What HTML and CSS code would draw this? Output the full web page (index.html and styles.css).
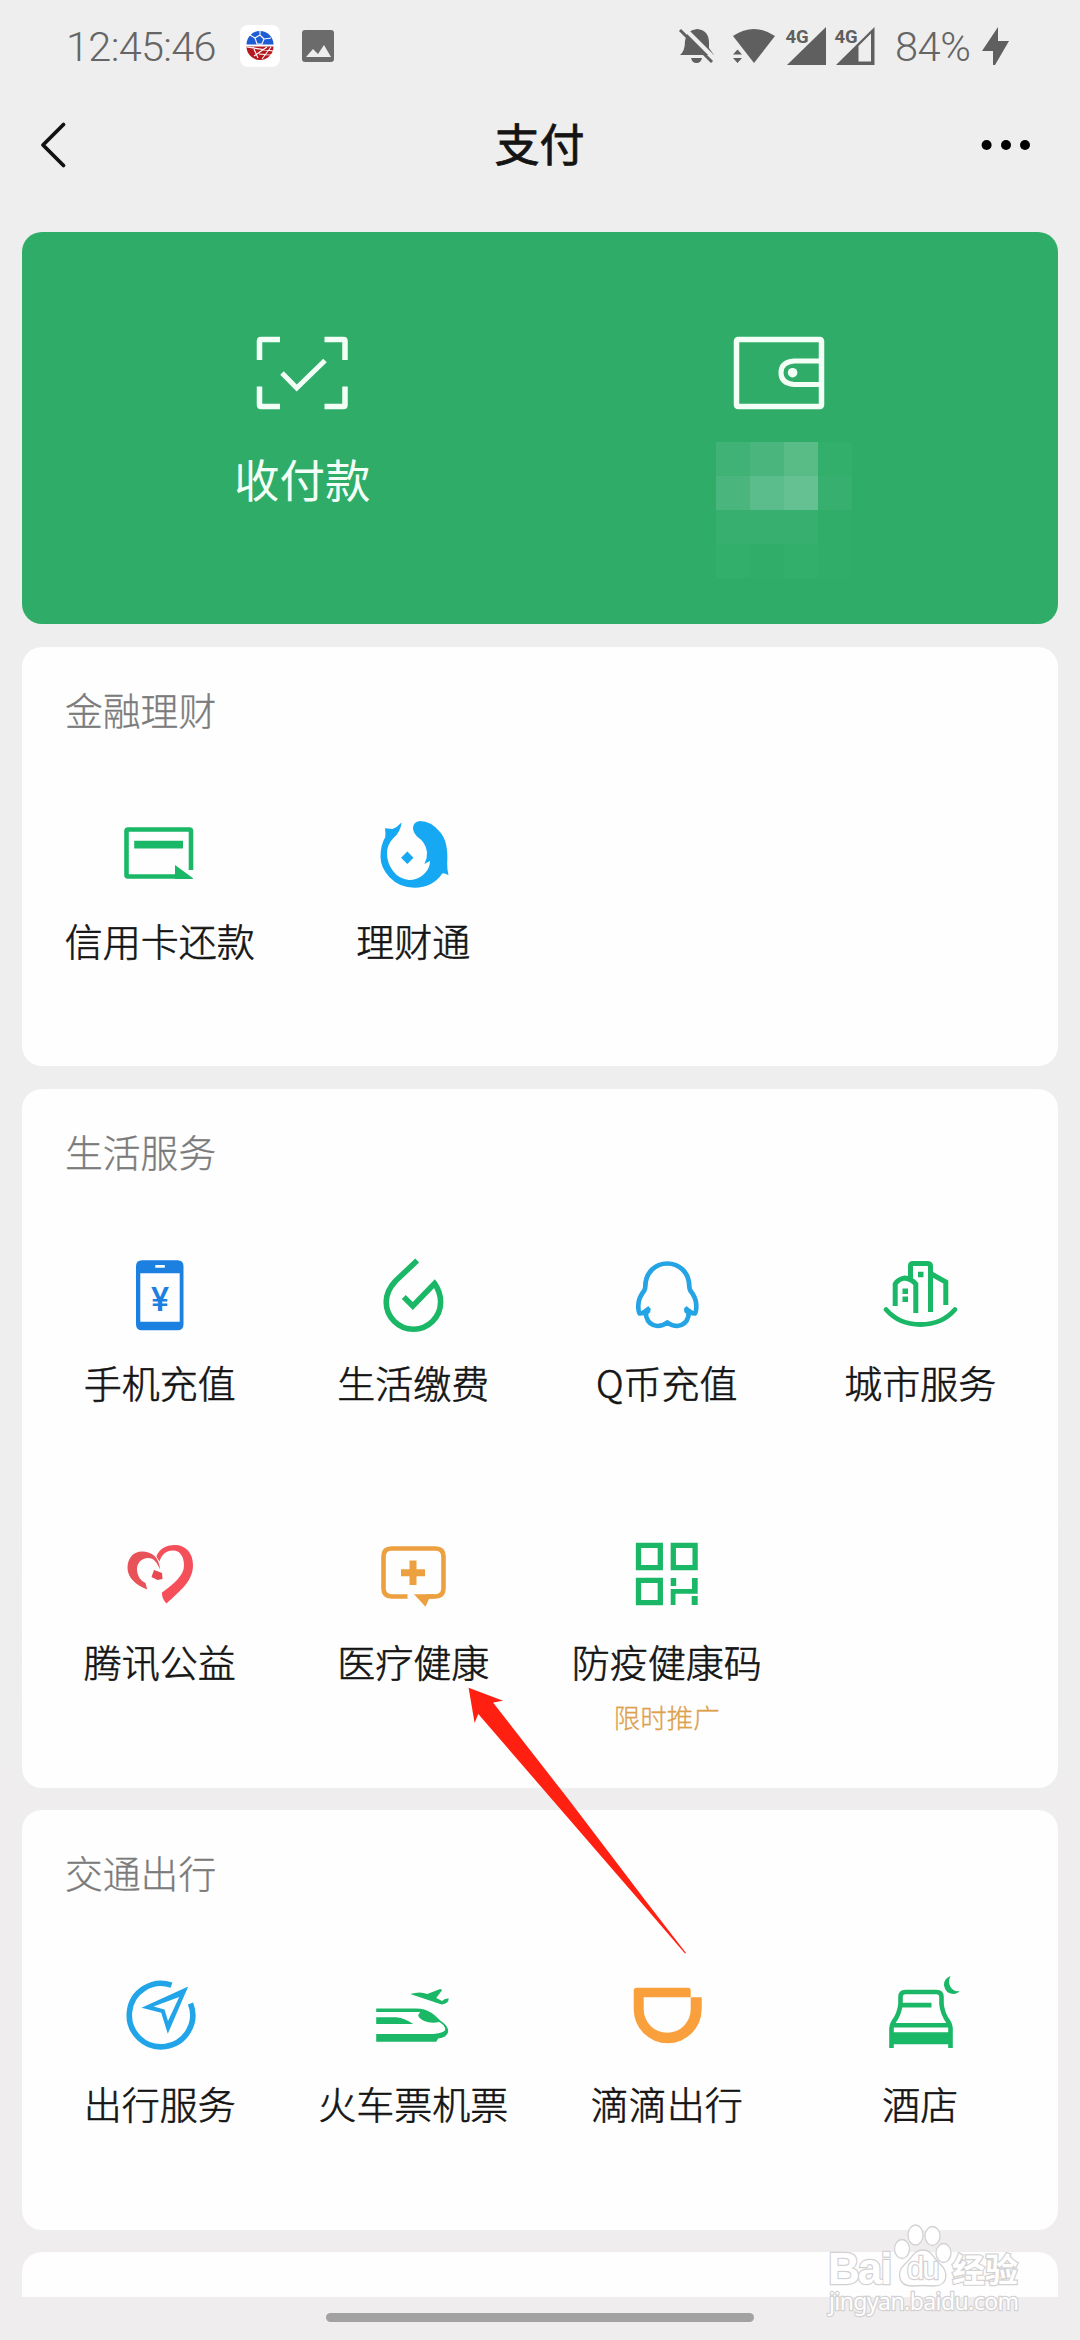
FILE: index.html
```html
<!DOCTYPE html>
<html lang="zh-CN">
<head>
<meta charset="utf-8">
<title>支付</title>
<link rel="stylesheet" href="styles.css">
</head>
<body>
<div class="screen">
  <header class="status">
    <div class="status-left">
      <span class="clock">12:45:46</span>
      <svg class="app-badge" viewBox="0 0 40 42"><rect width="40" height="42" rx="8" fill="#fff"/><path d="M6.500 19.500a13.500 13.500 0 0 1 27 0z" fill="#1d5cd2"/><path d="M6.500 21.500h27a13.500 13.500 0 0 1-27 0z" fill="#b3191f"/><path d="M15 13l5-3 4 4-2 5h-5zM15 13l-5-3M24 14l7-1M20 10v-4M7 22l26 4M14 31l13-9M18 33l-5-11M19 29l13 1M22 34l9-12" fill="none" stroke="#fff" stroke-width="1.100"/></svg>
      <svg class="photo" viewBox="0 0 32 32"><rect width="32" height="32" rx="3" fill="#6b6b6b"/><path d="M4 27l7-8 5 5 6-9 7 12z" fill="#eee"/></svg>
    </div>
    <div class="status-right">
      <svg width="36" height="36" viewBox="678 29 36 36"><path d="M680 56q5-4 5-14 1-11 12-12 12 1 12 14v5l5 7zM691 59h11q-1 5-5.500 5t-5.500-5" fill="#5f5f5f"/><path d="M684 29l34 34" stroke="#eee" stroke-width="4"/><path d="M680 31l32 32" stroke="#5f5f5f" stroke-width="3"/></svg>
      <svg class="wifi" width="44" height="36" viewBox="732 28 44 36"><path d="M733 36q21-14 42 0l-21 27z" fill="#5f5f5f"/><path d="M732 55l5.500-7 5.500 7v3l-5.500 7-5.500-7z" fill="#eee"/><path d="M733 54.500l4.500-5 4.500 5zM733 58l4.500 5 4.500-5z" fill="#5f5f5f"/></svg>
      <svg class="signal" width="42" height="40" viewBox="785 25 42 40"><path d="M787 64l39-38v38z" fill="#5f5f5f"/><text x="785.500" y="41.500" class="net">4G</text></svg>
      <svg class="signal" width="42" height="40" viewBox="834 25 42 40"><path d="M836 64l38.500-38v38z" fill="#5f5f5f"/><path d="M858.500 45l12.500-12.500v28h-12.500z" fill="#eee"/><text x="834.500" y="41.500" class="net">4G</text></svg>
      <span class="battery">84%</span>
      <svg width="28" height="40" viewBox="982 26 28 40"><path d="M998 27v14h11l-14 24h-2V51h-11z" fill="#5f5f5f"/></svg>
    </div>
  </header>
  <nav class="nav">
    <svg width="30" height="48" viewBox="38 121 30 48"><path d="M63.500 124.500L43 145l20.500 20.500" fill="none" stroke="#111" stroke-width="3.800" stroke-linecap="round" stroke-linejoin="round"/></svg>
    <h1>支付</h1>
    <svg width="50" height="12" viewBox="980 139 50 12"><g fill="#000"><circle cx="985.600" cy="145" r="5"/><circle cx="1005" cy="145" r="5"/><circle cx="1024" cy="145" r="5"/></g></svg>
  </nav>

  <main class="cards">
    <section class="hero">
      <div class="hero-item">
        <svg width="92" height="74" viewBox="256 336 92 74"><g fill="none" stroke="#f3fff6" stroke-width="5.500"><path d="M259.500 360v-19q0-1.500 1.500-1.500h19M324.500 339.500h19q1.500 0 1.500 1.500v19M345 386.500v18.500q0 1.500-1.500 1.500h-19M280 406.500h-19q-1.500 0-1.500-1.500v-18.500"/><path d="M282 373l14.700 15L325 360.500" stroke-width="5"/></g></svg>
        <span class="hero-label">收付款</span>
      </div>
      <div class="hero-item">
        <svg width="92" height="74" viewBox="731 336 92 74"><rect x="734.500" y="339.500" width="85" height="67" rx="1.500" fill="none" stroke="#f3fff6" stroke-width="5.500"/><path d="M819 361h-27q-13 1-13 11.700t13 11.700h27" fill="none" stroke="#f3fff6" stroke-width="5"/><circle cx="790.600" cy="372.700" r="4.800" fill="#f3fff6"/></svg>
        <div class="mosaic">
          <i class="m3"></i><i class="m4"></i><i class="m5"></i><i class="m1"></i>
          <i class="m4"></i><i class="m6"></i><i class="m7"></i><i class="m2"></i>
          <i class="m2"></i><i class="m2"></i><i class="m2"></i><i class="m0"></i>
          <i class="m1"></i><i class="m0"></i><i class="m1"></i><i class="m0"></i>
        </div>
      </div>
    </section>

    <section class="card">
      <h2>金融理财</h2>
      <div class="grid">
        <div class="tile"><svg viewBox="120 813 80 80"><path d="M191 870v-39q0-1.500-1.500-1.500h-61.500q-1.500 0-1.500 1.500v44q0 1.500 1.500 1.500h55" fill="none" stroke="#1ab767" stroke-width="4.600"/><path d="M134.200 840.700H183v7.800h-48.800zM175 865l17.800 13v1H175z" fill="#1ab767"/></svg><span>信用卡还款</span></div>
        <div class="tile"><svg viewBox="373.500 813 80 80"><path d="M402 822.500Q397.500 827.500 393 829l-7.600-.8q1 5 .3 9Q381 845 381 856.700q0 11 9 20.500 10 10.500 25 10.500 18 0 28-14.500 3 0 6 2-1.500-6-1.300-12 1.300-22-7.200-31.200-9-11-20-11-7 1-7 7 0 4 4 8.500 9 6 10 15.500.5 6-2.600 12l5.600-3q0 8-7 14-6 5-14 5-10-1-16-9-6-8-6-17.700 0-9 6.500-15.300 7-6 8.100-15.500z" fill="#16a8f3"/><path d="M407.800 851.500l6.200 6.200-6.200 6.200-6.200-6.200z" fill="#16a8f3"/></svg><span>理财通</span></div>
      </div>
    </section>

    <section class="card">
      <h2>生活服务</h2>
      <div class="grid">
        <div class="tile"><svg viewBox="120 1254 80 80"><path fill-rule="evenodd" d="M142 1259.300h35.500q6 0 6 6v58q0 6-6 6H142q-6 0-6-6v-58q0-6 6-6zm-1.700 13v48.500h39.400v-48.500zm15-8.300v2.800h9.500v-2.800z" fill="#1c80e0"/><text x="160" y="1309.500" class="yen">¥</text></svg><span>手机充值</span></div>
        <div class="tile"><svg viewBox="373.500 1254 80 80"><path d="M417.700 1259.500L396 1280q-9.300 10-9.300 21a27.200 27.200 0 0 0 54.400 0q0-10-6.100-18.500l-21.700 22.500-9-9" fill="none" stroke="#1ab767" stroke-width="5.600"/></svg><span>生活缴费</span></div>
        <div class="tile"><svg viewBox="627 1254 80 80"><path d="M667.300 1262.500c-12 0-22 9-22 23q0 2-1 4c-4 5-6 10-6 15 0 3 .5 7 1.500 8q4 0 8.500-4-3 2-2 7c1.500 6 6 9 11 9.500q5.500 0 10-3.500 4.500 3.500 10 3.500c5-.5 9.500-3.500 11-9.500q1-5-2-7 4.500 4 8.500 4c1-1 1.500-5 1.500-8 0-5-2-10-6-15q-1-2-1-4c0-14-10-23-22-23z" fill="none" stroke="#24a4e4" stroke-width="4.700" stroke-linejoin="round"/><path d="M639 1312l9.500-7 2 6-5 4zM695.600 1312l-9.500-7-2 6 5 4z" fill="#24a4e4"/></svg><span>Q币充值</span></div>
        <div class="tile"><svg viewBox="879.500 1254 80 80"><g fill="none" stroke="#1ab767" stroke-width="5"><path d="M894.700 1305v-22q3-5 9.600-6 7 1 11 6v29M910 1277v-12q0-2.500 2.500-2.500h14q3.500 0 3.500 2.500v46M931 1273l14.300 8v23"/><path d="M885.500 1308.500q13 15 34.500 15t34.500-15" stroke-linecap="round" stroke-width="4.800"/></g><path d="M917.500 1270.800h5.500v5.500h-5.500zM902 1287.500h5.500v5.500H902zM902 1295.500h5.500v5.500H902z" fill="#1ab767"/></svg><span>城市服务</span></div>
        <div class="tile"><svg viewBox="120 1533 80 80"><path d="M147.200 1588.500c-11-4-19.700-12-19.700-21.500 0-10 6-16.500 14.500-16.500 10 0 17.500 6 18 18-3-7-6-11.500-12-11.500-6.500 0-11 5-11 11 0 7 4 12 8.500 14z" fill="#e8535a"/><path d="M156.400 1555.500c3-7.500 9-11.500 18.400-11.500 11 0 18.200 8 18.200 20 0 16-12 25-26.500 38.500q-5-5-4.500-11c12-9 22-17 22-27 0-9-4-15-11-15-7.500 0-11 4-13.500 11z" fill="#f5505a"/><path d="M154 1569l8 3 .5 6-5 1-6-3z" fill="#e84850"/></svg><span>腾讯公益</span></div>
        <div class="tile"><svg viewBox="373.500 1533 80 80"><path d="M408 1595.500h-16q-8-.5-8-8v-32q0-8 8-8h44q8 0 8 8v32q0 7.500-8 8h-9" fill="none" stroke="#eda03f" stroke-width="4.600"/><path d="M414.500 1593.200h20v4.600h-5l-3.500 8zM410 1568.200v-8.700h7v8.700h8.500v7H417v8.700h-7v-8.700h-8.500v-7z" fill="#eda03f"/></svg><span>医疗健康</span></div>
        <div class="tile"><svg viewBox="627 1533 80 80"><path d="M638.500 1544.300h21.800v22.300h-21.800zM673.300 1544.300h21.800v22.300h-21.800zM638.500 1579.300h21.800v22.300h-21.800z" fill="none" stroke="#1ab767" stroke-width="5.300"/><path d="M670.700 1577h5.500v8h-5.500zM670.700 1588H692v-11h5.700v15.700H675.500V1604h-4.800zM691.700 1595h6v9h-6z" fill="#1ab767"/></svg><span>防疫健康码</span><small>限时推广</small></div>
      </div>
    </section>

    <section class="card">
      <h2>交通出行</h2>
      <div class="grid">
        <div class="tile"><svg viewBox="120.500 1976 80 80"><path d="M172 1985.200a31.700 31.700 0 1 0 19 18.300" fill="none" stroke="#22a5e8" stroke-width="5.600"/><path fill-rule="evenodd" d="M188.700 1986.500l-46.700 21.200 19.700 5 6.600 21zm-9 10.500l-11.200 24-3.500-11.500-11-3z" fill="#22a5e8"/></svg><span>出行服务</span></div>
        <div class="tile"><svg viewBox="373.500 1976 80 80"><path d="M376.700 2008.500h40c12 0 18 6 24 12q8 5 8 11-1 6-10 7l-2 3.200h-60v-7.700h57q10-1 12-4 0-5-6-8-8 2-15-1-6-3-6-6l2-3h-44zM376.700 2017.300h20q9 1 17 6.700h-37zM410.700 1994q10-3 17 0l13-5 2 1-6 8 6 3q2-3 6.500-2.500 0 5-7 6z" fill="#1ab767"/></svg><span>火车票机票</span></div>
        <div class="tile"><svg viewBox="627 1976 80 80"><path d="M637 1987.700h51q2.700 0 2.700 2.500v7.100h11v12a34 34 0 0 1-68 0V1991q0-3.300 3.300-3.300zm6.700 9.600v12a23.500 23.500 0 0 0 47 0v-12z" fill="#f99f3b"/></svg><span>滴滴出行</span></div>
        <div class="tile"><svg viewBox="879.500 1976 80 80"><path d="M891 2048v-20q0-3 2-6 6-8 7-18v-7q0-5 5-5h31q5 0 5 5v7q1 10 7 18 2 3 2 6v20" fill="none" stroke="#1ab767" stroke-width="4.600"/><path d="M900 2002.800h31v4.600h-31zM892 2023h57v4.500h-57zM892 2032.300h57v12h-57zM950 1976q-7 3-6.500 9.500 1.500 8 9 8.500 5-.5 6.500-3-6 1-9-4t0-11z" fill="#1ab767"/></svg><span>酒店</span></div>
      </div>
    </section>

    <section class="card peek"></section>
  </main>

  <div class="home-bar"></div>

  <svg class="pointer" width="220" height="270" viewBox="467 1686 220 270"><path d="M468.600 1687.700l34.500 13-10.100 1.800L569 1800l76 100 41 53-1 .5-46-53.500-86.500-100-74.200-86-3.700 9z" fill="#ff2012"/></svg>

  <svg class="watermark" width="210" height="100" viewBox="820 2218 210 100">
    <g fill="#fff" stroke="#d3d1d2" stroke-width="1.300">
      <text x="828" y="2284" class="wm-name">Bai</text>
      <ellipse cx="902" cy="2249" rx="7.500" ry="9.500"/><ellipse cx="915.500" cy="2235" rx="7.500" ry="10"/><ellipse cx="932.500" cy="2236" rx="7.500" ry="9.500"/><ellipse cx="943.500" cy="2253" rx="7.500" ry="9.500"/>
      <path d="M923 2250c9 0 10 8 17 14 9 8 8 22-6 22q-11-1-22 0c-14 0-16-14-7-22 8-7 9-14 18-14z"/>
      <text x="907" y="2279" class="wm-du">du</text>
      <text x="952" y="2282" class="wm-cn">经验</text>
      <text x="829" y="2310" class="wm-url" textLength="190">jingyan.baidu.com</text>
    </g>
  </svg>
</div>
</body>
</html>
```
FILE: styles.css
```css
* { box-sizing: border-box; }
body { margin: 0; background: #eeeeee; }
.screen {
  position: relative;
  width: 1080px;
  height: 2340px;
  overflow: hidden;
  display: flex;
  flex-direction: column;
  background: linear-gradient(#eeeeee 60%, #f0edee 92%);
  font-family: "Noto Sans CJK SC", sans-serif;
  font-weight: 300;
  color: #141414;
}
svg { display: block; flex: none; overflow: visible; }

.status {
  height: 92px;
  padding: 0 70px 0 66px;
  display: flex;
  justify-content: space-between;
  align-items: center;
  color: #656565;
  font-family: Roboto, sans-serif;
  font-size: 41.500px;
}
.status-left, .status-right { display: flex; align-items: center; }
.clock { width: 174px; letter-spacing: -.7px; white-space: nowrap; }
.app-badge { width: 40px; height: 42px; }
.photo { width: 32px; height: 32px; margin-left: 22px; }
.wifi { margin-left: 18px; }
.signal { margin-left: 9px; }
.signal + .signal { margin-left: 7px; }
.battery { width: 87px; margin-left: 19px; letter-spacing: -.4px; white-space: nowrap; }
.net { font: 700 18.500px Roboto, sans-serif; fill: #5f5f5f; }

.nav {
  height: 105px;
  padding: 0 49px 0 38px;
  display: flex;
  justify-content: space-between;
  align-items: center;
}
.nav h1 {
  margin: -3px -30px 0 0;
  font-size: 45px;
  font-weight: 400;
  line-height: 60px;
  -webkit-text-stroke: .8px currentColor;
}

.cards { padding: 35px 22px 0; display: flex; flex-direction: column; gap: 22.500px; }
.hero {
  height: 392px;
  border-radius: 20px;
  background: #2eac68;
  display: flex;
  padding: 104px 41px 0 42px;
}
.hero-item { flex: 1; display: flex; flex-direction: column; align-items: center; }
.hero-label { margin-top: 35px; font-size: 45.500px; line-height: 66px; color: #f3fff6; font-weight: 400; }
.mosaic {
  margin: 32px 0 0 10px;
  display: grid;
  grid-template-columns: repeat(4, 34px);
  grid-auto-rows: 34px;
}
.m0 { background: #2fad69; }
.m1 { background: #33af6c; }
.m2 { background: #37b06f; }
.m3 { background: #40b275; }
.m4 { background: #4ab57c; }
.m5 { background: #59bb86; }
.m6 { background: #5bbd8c; }
.m7 { background: #66c192; }

.card { border-radius: 20px; background: #fefefe; padding: 37px 11px 0; }
.card h2 {
  margin: 0;
  padding-left: 32px;
  height: 103px;
  font-size: 37.800px;
  line-height: 50px;
  font-weight: 300;
  color: #7b7b7b;
  -webkit-text-stroke: .3px currentColor;
}
.grid { display: grid; grid-template-columns: repeat(4, 1fr); grid-auto-rows: 279.500px; }
.tile { padding-top: 26px; display: flex; flex-direction: column; align-items: center; }
.tile svg { width: 80px; height: 80px; }
.tile span {
  margin-top: 22px;
  font-size: 38px;
  line-height: 50px;
  white-space: nowrap;
  -webkit-text-stroke: .6px currentColor;
}
.tile small {
  margin-top: 12px;
  font-size: 26.500px;
  line-height: 38px;
  color: #dda04c;
  -webkit-text-stroke: .3px currentColor;
}
.yen { font: 500 34px Roboto, sans-serif; fill: #1c80e0; text-anchor: middle; }
.peek { height: 45px; padding: 0; border-radius: 20px 20px 0 0; }

.home-bar { width: 428px; height: 9px; margin: 16px auto 0; border-radius: 5px; background: #a2a2a2; }
.pointer { position: absolute; left: 467px; top: 1686px; }
.watermark { position: absolute; left: 820px; top: 2218px; }
.watermark text { paint-order: stroke; stroke-width: 2.400px; }
.wm-name { font: 700 44px "Liberation Sans", sans-serif; letter-spacing: -2px; }
.wm-du { font: 400 31px "Liberation Sans", sans-serif; letter-spacing: -2px; }
.wm-cn { font: 700 33px "Liberation Sans", "Noto Sans CJK SC", sans-serif; }
.wm-url { font: 400 23px "Noto Sans", sans-serif; }
```
